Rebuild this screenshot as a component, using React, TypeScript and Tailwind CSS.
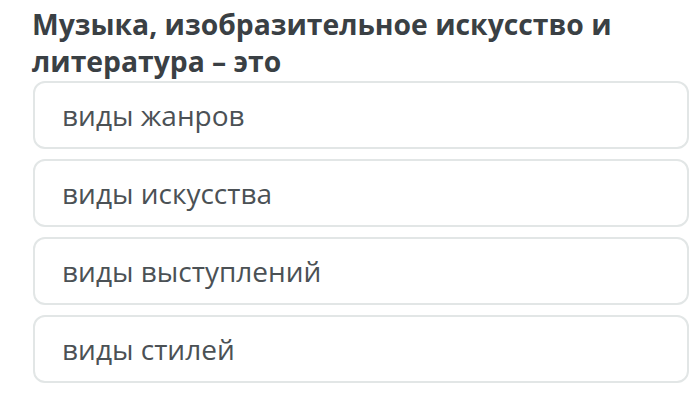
const options = ['виды жанров', 'виды искусства', 'виды выступлений', 'виды стилей'];

const font = { fontFamily: '"Open Sans", "Noto Sans", sans-serif' };

export default function App() {
  return (
    <div className="min-h-[417px] bg-white pl-[32px] pr-[2px] pt-[6px]" style={font}>
      <h1 className="text-[28.3px] font-bold leading-[37px] text-[#3a4044]">
        Музыка, изобразительное искусство и литература – это
      </h1>
      <div className="mt-[1px] flex flex-col gap-[10px] pl-px">
        {options.map((text) => (
          <div
            key={text}
            className="flex h-[68px] items-center rounded-[12px] border-2 border-[#e2e6e6] bg-white pl-[27px] text-[28px] text-[#4b5155]"
          >
            {text}
          </div>
        ))}
      </div>
    </div>
  );
}
